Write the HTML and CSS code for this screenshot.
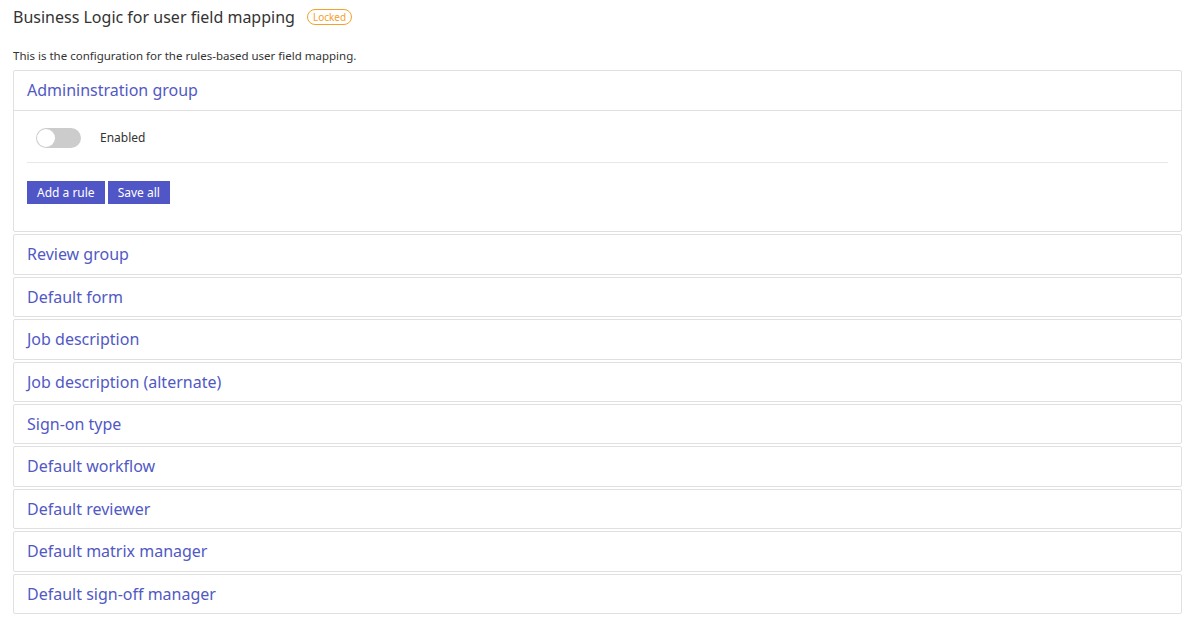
FILE: index.html
```html
<!DOCTYPE html>
<html>
<head>
<meta charset="utf-8">
<link rel="stylesheet" href="styles.css">
</head>
<body>
<div class="page">
  <div class="title-row">
    <h1 class="title">Business Logic for user field mapping</h1>
    <span class="badge">Locked</span>
  </div>
  <p class="desc">This is the configuration for the rules-based user field mapping.</p>
  <div class="panels">
    <div class="panel">
      <div class="panel-head panel-head-open">Admininstration group</div>
      <div class="panel-body">
        <div class="toggle-row">
          <span class="toggle"><span class="knob"></span></span>
          <span class="toggle-label">Enabled</span>
        </div>
        <div class="actions">
          <button class="btn">Add a rule</button>
          <button class="btn">Save all</button>
        </div>
      </div>
    </div>
    <div class="panel"><div class="panel-head">Review group</div></div>
    <div class="panel"><div class="panel-head">Default form</div></div>
    <div class="panel"><div class="panel-head">Job description</div></div>
    <div class="panel"><div class="panel-head">Job description (alternate)</div></div>
    <div class="panel"><div class="panel-head">Sign-on type</div></div>
    <div class="panel"><div class="panel-head">Default workflow</div></div>
    <div class="panel"><div class="panel-head">Default reviewer</div></div>
    <div class="panel"><div class="panel-head">Default matrix manager</div></div>
    <div class="panel"><div class="panel-head">Default sign-off manager</div></div>
  </div>
</div>
</body>
</html>
```
FILE: styles.css
```css
* { box-sizing: border-box; }
body {
  margin: 0;
  font-family: "Noto Sans", "Open Sans", sans-serif;
  color: #333;
  background: #fff;
}
.page {
  padding: 4px 13px 0 13px;
  width: 1195px;
}
.title-row {
  display: flex;
  align-items: center;
  gap: 12px;
  height: 26px;
}
.title {
  margin: 0;
  font-size: 16px;
  font-weight: 400;
  color: #333;
}
.badge {
  display: inline-block;
  border: 1px solid #f5a02a;
  color: #f5a02a;
  border-radius: 9px;
  font-size: 10px;
  line-height: 14px;
  padding: 0 5px;
}
.desc {
  margin: 18px 0 0 0;
  font-size: 11.5px;
  line-height: 16px;
  color: #333;
}
.panels {
  margin-top: 6px;
  display: flex;
  flex-direction: column;
  gap: 2px;
}
.panel {
  border: 1px solid #e0e0e0;
  border-radius: 2px;
}
.panel-head {
  color: #5159c4;
  font-size: 16px;
  line-height: 22px;
  padding: 8px 14px 8px 13px;
  height: 38.4px;
}
.panel-head-open {
  height: 39.4px;
}
.panel-body {
  border-top: 1px solid #e0e0e0;
  padding: 0 13px 27px 13px;
}
.toggle-row {
  display: flex;
  align-items: center;
  height: 52px;
  padding: 2px 0 0 9px;
  border-bottom: 1px solid #e8e8e8;
}
.toggle {
  width: 45px;
  height: 20px;
  border-radius: 10px;
  background: #cccccc;
  position: relative;
  display: inline-block;
}
.knob {
  position: absolute;
  left: 1px;
  top: 1px;
  width: 18px;
  height: 18px;
  border-radius: 50%;
  background: #fff;
}
.toggle-label {
  margin-left: 19px;
  font-size: 12px;
  color: #333;
}
.actions {
  display: flex;
  gap: 3px;
  padding-top: 18px;
}
.btn {
  font-family: "Noto Sans", "Open Sans", sans-serif;
  background: #5056c6;
  color: #fff;
  border: 0;
  font-size: 12px;
  height: 23px;
  padding: 0 10px;
  cursor: pointer;
}
```
